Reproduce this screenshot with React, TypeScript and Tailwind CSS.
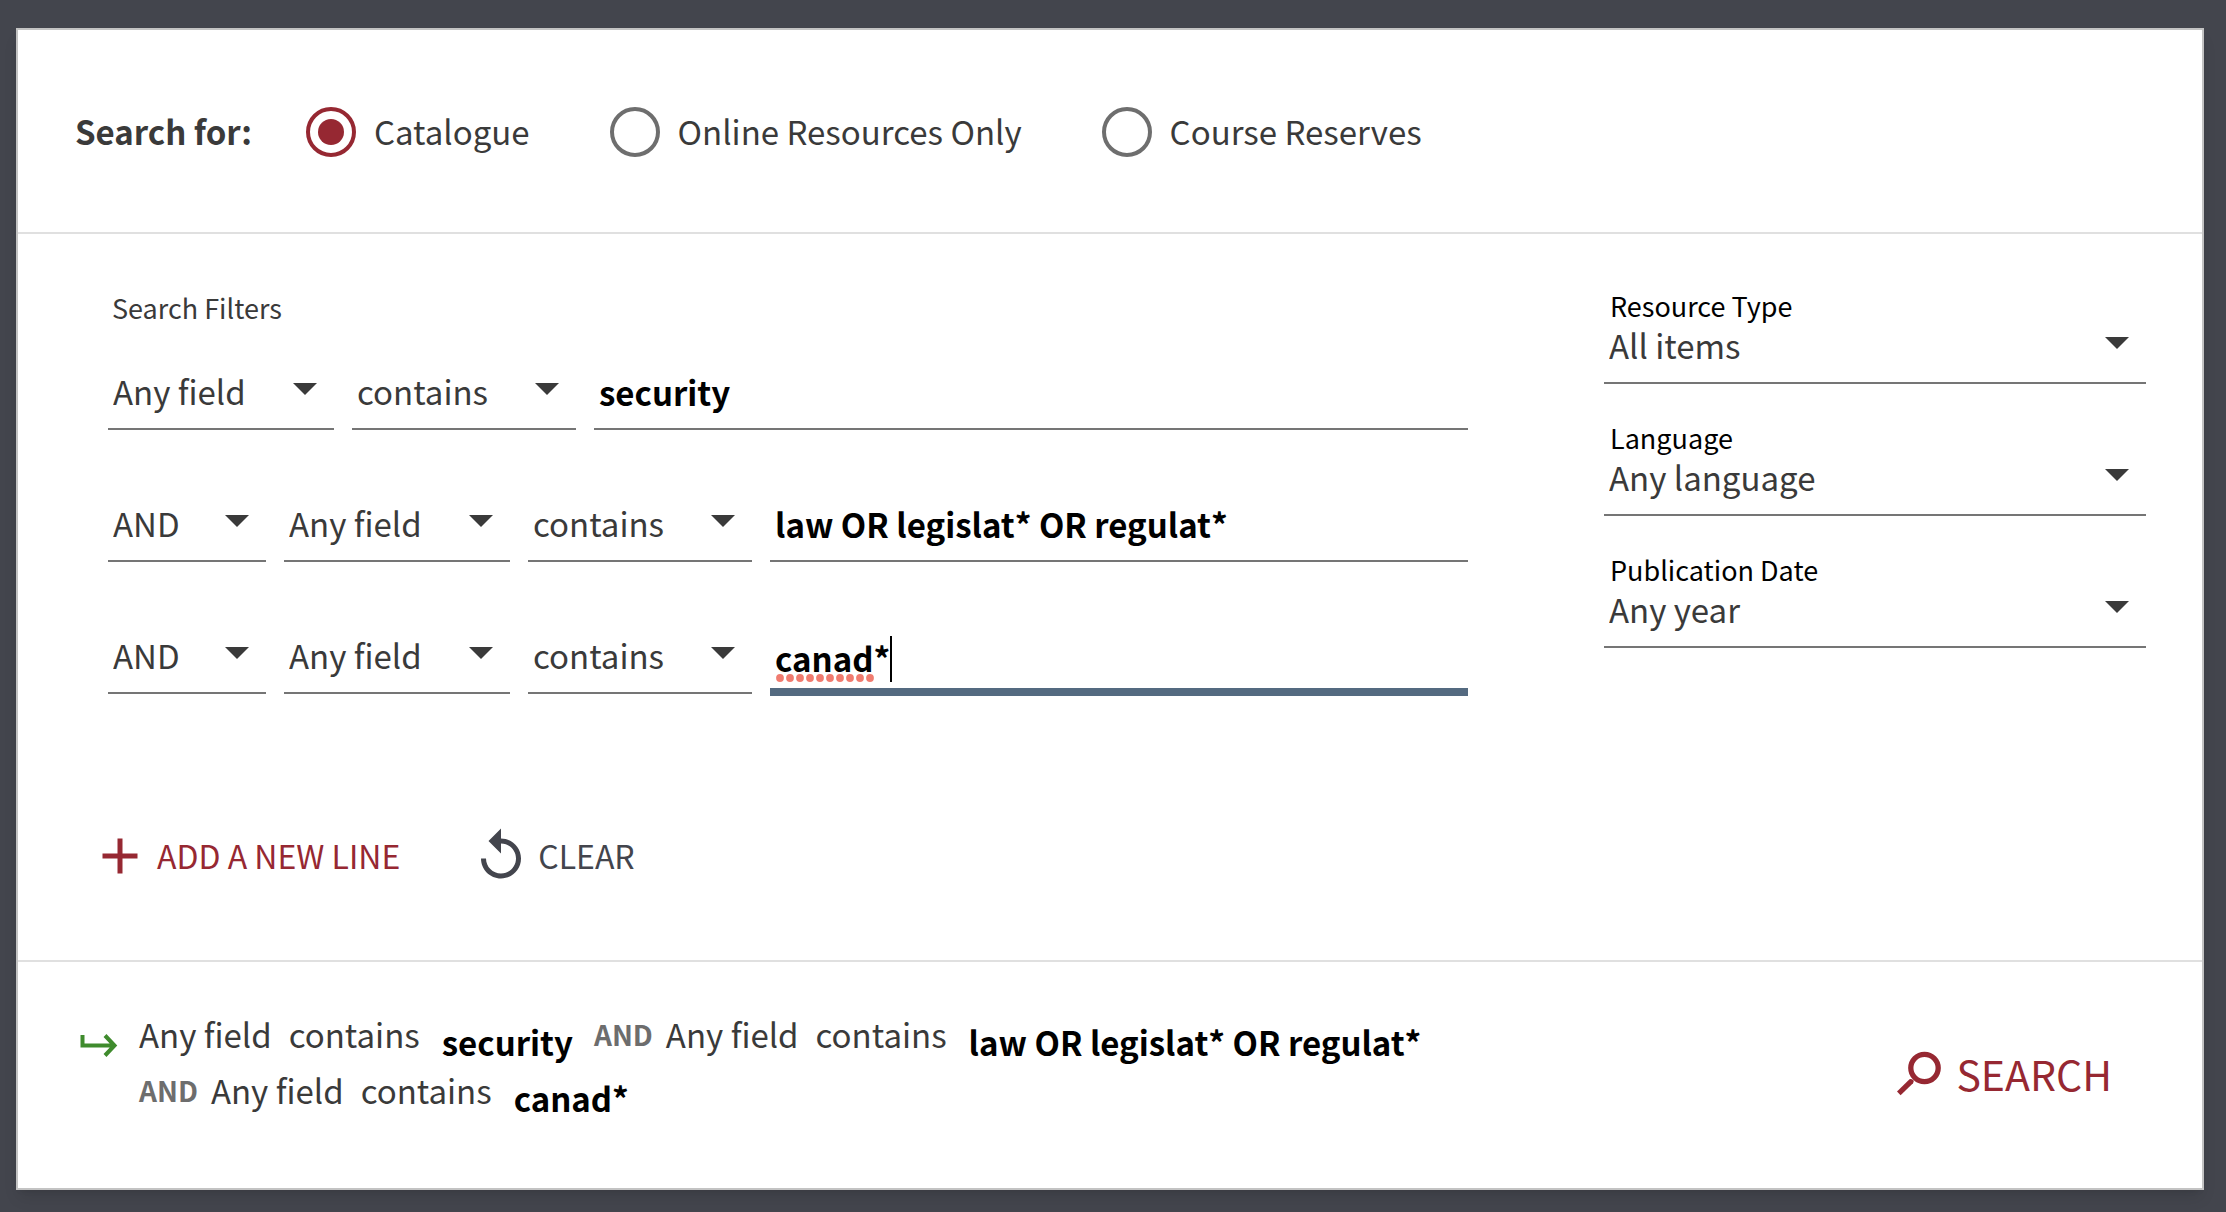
import { useState } from "react"

const fieldOptions = ["Any field", "Title", "Author / Creator", "Subject"]
const matchOptions = ["contains", "is (exact)", "starts with"]
const operatorOptions = ["AND", "OR", "NOT"]

const scopes = ["Catalogue", "Online Resources Only", "Course Reserves"]

const facets = [
  { id: "resource-type", label: "Resource Type", options: ["All items", "Books", "Articles"] },
  { id: "language", label: "Language", options: ["Any language", "English", "French"] },
  { id: "publication-date", label: "Publication Date", options: ["Any year", "Last year", "Last 5 years"] },
]

const initialLines = [
  { id: 1, query: "security" },
  { id: 2, query: "law OR legislat* OR regulat*" },
  { id: 3, query: "canad*" },
]

type SelectProps = {
  id?: string
  label?: string
  options: string[]
  className?: string
}

function Select({ id, label, options, className = "" }: SelectProps) {
  return (
    <div className={`relative h-16 shrink-0 ${className}`}>
      <select
        id={id}
        aria-label={label}
        className="h-full w-full appearance-none border-b-2 border-[#757575] bg-transparent pb-2.5 pl-[5px] text-[33px] text-[#3a3a3a] outline-none"
      >
        {options.map((option) => (
          <option key={option}>{option}</option>
        ))}
      </select>
      <svg
        viewBox="0 0 24 12"
        className="pointer-events-none absolute top-[17px] right-[17px] h-3 w-6 fill-[#3a3a3a]"
        aria-hidden="true"
      >
        <path d="M0 0h24L12 12z" />
      </svg>
    </div>
  )
}

// red dots that run under the misspelled word, and the text cursor after it
function ActiveMarks() {
  return (
    <>
      <svg viewBox="0 0 98 8" className="pointer-events-none absolute top-11 left-1.5 h-2 w-[98px] fill-[#f07c70]" aria-hidden="true">
        {Array.from({ length: 10 }, (_, i) => (
          <circle key={i} cx={4 + i * 10} cy="4" r="3.9" />
        ))}
      </svg>
      <span className="pointer-events-none absolute top-1.5 left-[120px] h-[46px] w-0.5 bg-black" />
    </>
  )
}

export default function App() {
  const [scope, setScope] = useState(scopes[0])
  const [lines, setLines] = useState(initialLines)
  const activeId = 3

  const updateLine = (id: number, query: string) => {
    setLines(lines.map((line) => (line.id === id ? { ...line, query } : line)))
  }

  const addLine = () => {
    setLines([...lines, { id: lines.length + 1, query: "" }])
  }

  return (
    <div className="min-h-screen bg-[#43454d] pt-7 pr-[22px] pb-[22px] pl-4 font-['Noto_Sans_CJK_SC','Noto_Sans',sans-serif] text-[#3a3a3a]">
      <form className="border-2 border-[#c3c3c3] bg-white shadow-lg" onSubmit={(e) => e.preventDefault()}>
        <fieldset className="flex items-center border-b-2 border-[#e0e0e0] px-[57px] pt-[73px] pb-[71px] text-[33px] leading-[56px]">
          <span className="mr-[54px] pb-0.5 font-semibold">Search for:</span>
          <div className="flex items-center gap-20">
            {scopes.map((name) => (
              <label key={name} className="flex items-center gap-[18px]">
                <input
                  type="radio"
                  name="scope"
                  checked={scope === name}
                  onChange={() => setScope(name)}
                  className="grid size-[50px] appearance-none place-items-center rounded-full border-4 border-[#6e6e6e] before:size-[26px] before:rounded-full checked:border-[#962832] checked:before:bg-[#962832]"
                />
                <span className="pb-0.5">{name}</span>
              </label>
            ))}
          </div>
        </fieldset>

        <div className="flex gap-[136px] border-b-2 border-[#e0e0e0] pr-14 pb-[74px] pl-[90px]">
          <div className="flex-1">
            <h2 className="mt-[54px] mb-[38px] pl-1 text-[27px] leading-10">Search Filters</h2>
            <div className="flex flex-col gap-[68px]">
              {lines.map((line, i) => (
                <div key={line.id} className="flex h-16 items-start gap-[18px]">
                  {i > 0 && <Select label="Operator" options={operatorOptions} className="w-[158px]" />}
                  <Select label="Field" options={fieldOptions} className="w-[226px]" />
                  <Select label="Match" options={matchOptions} className="w-[224px]" />
                  <div className="relative flex-1">
                    <input
                      type="text"
                      aria-label="Search term"
                      spellCheck={false}
                      value={line.query}
                      onChange={(e) => updateLine(line.id, e.target.value)}
                      className={`block w-full pl-[5px] text-[33px] font-semibold text-black outline-none ${
                        line.id === activeId
                          ? "h-[66px] border-b-8 border-[#546a80] pb-0.5"
                          : "h-16 border-b-2 border-[#757575] pb-2.5"
                      }`}
                    />
                    {line.id === activeId && <ActiveMarks />}
                  </div>
                </div>
              ))}
            </div>

            <div className="mt-[132px] -ml-[18px] flex gap-[71px] text-[32px] leading-[58px]">
              <button type="button" onClick={addLine} className="flex items-center gap-[7px] text-[#962832]">
                <svg viewBox="0 0 24 24" className="size-[60px] fill-current" aria-hidden="true">
                  <path d="M19 13h-6v6h-2v-6H5v-2h6V5h2v6h6v2z" />
                </svg>
                <span className="pb-0.5">ADD A NEW LINE</span>
              </button>
              <button type="button" onClick={() => setLines(initialLines)} className="flex items-center gap-[7px] text-[#43454d]">
                <svg viewBox="0 0 24 24" className="size-[60px] fill-current" aria-hidden="true">
                  <path d="M12 5V1L7 6l5 5V7c3.31 0 6 2.69 6 6s-2.69 6-6 6-6-2.69-6-6H4c0 4.42 3.58 8 8 8s8-3.58 8-8-3.58-8-8-8z" />
                </svg>
                <span className="pb-0.5">CLEAR</span>
              </button>
            </div>
          </div>

          <div className="flex w-[542px] shrink-0 flex-col gap-10 pt-[58px]">
            {facets.map((facet) => (
              <div key={facet.id}>
                <label htmlFor={facet.id} className="block pl-1.5 text-[27px] leading-7 text-black">
                  {facet.label}
                </label>
                <Select id={facet.id} options={facet.options} />
              </div>
            ))}
          </div>
        </div>

        <div className="flex items-center pr-[90px] pl-[60px]">
          <svg viewBox="0 0 40 24" className="mt-[71px] h-6 w-10 self-start fill-none stroke-[#3f8b2d] stroke-4" aria-hidden="true">
            <path d="M4.5 2v10.5H37M27 2.500l9.500 10-9.500 10" />
          </svg>
          <div className="flex flex-1 flex-wrap gap-x-[21px] self-start pt-11 pb-[70px] pl-[21px] text-[33px] leading-[56px]">
            {lines.map((line, i) => (
              <div key={line.id} className="flex h-14 items-start">
                {i > 0 && <span className="mr-[13px] text-[28px] font-semibold text-[#6d6d6d]">AND</span>}
                <span className="mr-[17px]">Any field</span>
                <span className="mr-[22px]">contains</span>
                <span className="leading-[72px] font-semibold text-black">{line.query}</span>
              </div>
            ))}
          </div>
          <button type="submit" className="flex items-center gap-3 pb-1 text-[41px] leading-[60px] text-[#962832]">
            <svg viewBox="0 0 48 48" className="size-12" aria-hidden="true">
              <circle cx="28.500" cy="19" r="13.700" fill="none" stroke="currentColor" strokeWidth="5.300" />
              <path d="M1 42.500L13.500 30.300Q15 29.500 17.500 31.300Q18.200 32.500 17 34.300L4.600 46.200z" fill="currentColor" />
            </svg>
            SEARCH
          </button>
        </div>
      </form>
    </div>
  )
}
